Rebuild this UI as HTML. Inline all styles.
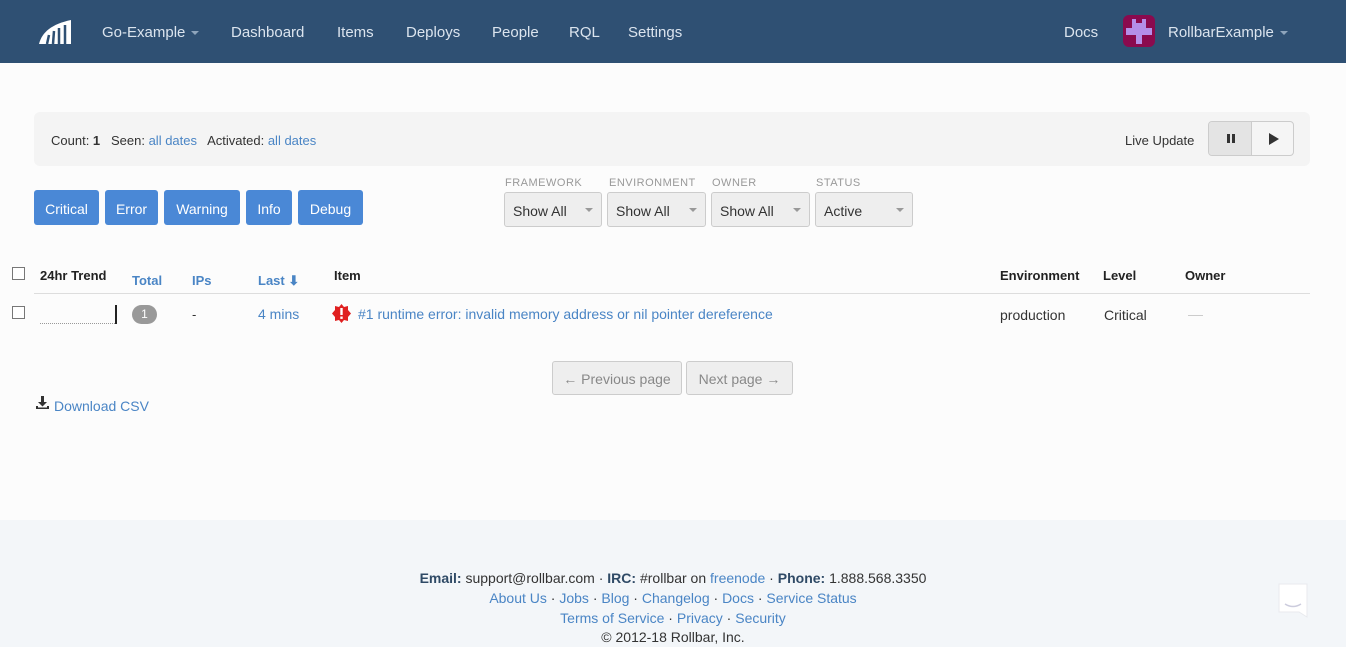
<!DOCTYPE html>
<html><head><meta charset="utf-8">
<style>
*{box-sizing:border-box;margin:0;padding:0}
body{width:1346px;height:647px;overflow:hidden;background:#fcfcfc;font-family:"Liberation Sans",sans-serif;font-size:13px;color:#333;position:relative}
a{color:#4a85c5;text-decoration:none}
.nav{position:absolute;left:0;top:0;width:1346px;height:63px;background:#2f5073}
.nav span{position:absolute;top:24px;font-size:15px;color:#dbe4ee}
.caret{display:inline-block;width:0;height:0;border-left:4px solid transparent;border-right:4px solid transparent;border-top:4px solid #8ea4bb;vertical-align:middle;margin-left:6px}
.bar{position:absolute;left:34px;top:112px;width:1276px;height:54px;background:#f4f4f4;border-radius:6px}
.lvl{position:absolute;top:190px;height:35px;background:#4a88d6;color:#fff;border-radius:3px;font-size:14px;line-height:38px;text-align:center}
.flab{position:absolute;top:177px;font-size:11px;color:#999;letter-spacing:.5px}
.sel{position:absolute;top:192px;height:35px;background:#eee;border:1px solid #ccc;border-radius:3px;font-size:14px;line-height:36px;padding-left:8px;color:#333}
.sel:after{content:"";position:absolute;right:8px;top:15px;border-left:4px solid transparent;border-right:4px solid transparent;border-top:4px solid #999}
.th{position:absolute;top:268px;font-weight:bold;font-size:13px;color:#222}
.cb{position:absolute;width:13px;height:13px;border:1px solid #777;background:#fff}
.btn{position:absolute;top:361px;height:34px;background:#eee;border:1px solid #ccc;border-radius:3px;color:#888;font-size:14px;line-height:34px;text-align:center}
.foot{position:absolute;left:0;top:520px;width:1346px;height:127px;background:#f3f6f9;text-align:center;font-size:14px;color:#333}
.foot div{position:absolute;left:0;width:1346px}
</style></head><body>
<div class="nav">
<svg style="position:absolute;left:39px;top:19px" width="33" height="26" viewBox="0 0 33 26"><path d="M0 25 C3 13 13 5 32 1 L32 25 Z" fill="#fff"/><path d="M8 25 L10 16 M14 25 L15 12 M20 25 L20 9 M26 25 L26 6" stroke="#2f5073" stroke-width="2.5"/></svg>
<span style="left:102px">Go-Example<i class="caret"></i></span>
<span style="left:231px">Dashboard</span>
<span style="left:337px">Items</span>
<span style="left:406px">Deploys</span>
<span style="left:492px">People</span>
<span style="left:569px">RQL</span>
<span style="left:628px">Settings</span>
<span style="left:1064px">Docs</span>
<div style="position:absolute;left:1123px;top:15px;width:32px;height:32px;background:#8a0a4e;border-radius:6px">
<svg width="32" height="32"><path d="M9 4h4v4h6V4h4v9h6v7h-10v9h-6v-9H3v-7h6z" fill="#b48ee8"/></svg></div>
<span style="left:1168px">RollbarExample<i class="caret"></i></span>
</div>
<div class="bar">
<div style="position:absolute;left:17px;top:21px">Count: <b>1</b> &nbsp; Seen: <a>all dates</a> &nbsp; Activated: <a>all dates</a></div>
<div style="position:absolute;left:1091px;top:21px">Live Update</div>
<div style="position:absolute;left:1174px;top:9px;width:86px;height:35px;border:1px solid #ccc;border-radius:4px;background:#f5f5f5;overflow:hidden">
<div style="position:absolute;left:0;top:0;width:43px;height:35px;background:#e4e4e4;border-right:1px solid #ccc"></div>
<div style="position:absolute;left:18px;top:12px;width:3px;height:9px;background:#333"></div><div style="position:absolute;left:23px;top:12px;width:3px;height:9px;background:#333"></div>
<div style="position:absolute;left:60px;top:11px;border-top:6px solid transparent;border-bottom:6px solid transparent;border-left:10px solid #333"></div>
</div></div>
<div class="lvl" style="left:34px;width:65px">Critical</div>
<div class="lvl" style="left:105px;width:53px">Error</div>
<div class="lvl" style="left:164px;width:76px">Warning</div>
<div class="lvl" style="left:246px;width:46px">Info</div>
<div class="lvl" style="left:298px;width:65px">Debug</div>
<div class="flab" style="left:505px">FRAMEWORK</div>
<div class="flab" style="left:609px">ENVIRONMENT</div>
<div class="flab" style="left:712px">OWNER</div>
<div class="flab" style="left:816px">STATUS</div>
<div class="sel" style="left:504px;width:98px">Show All</div>
<div class="sel" style="left:607px;width:99px">Show All</div>
<div class="sel" style="left:711px;width:99px">Show All</div>
<div class="sel" style="left:815px;width:98px">Active</div>
<div class="cb" style="left:12px;top:267px"></div>
<div class="th" style="left:40px">24hr Trend</div>
<div class="th" style="left:132px;top:273px;color:#4a85c5">Total</div>
<div class="th" style="left:192px;top:273px;color:#4a85c5">IPs</div>
<div class="th" style="left:258px;top:273px;color:#4a85c5">Last &#11015;</div>
<div class="th" style="left:334px">Item</div>
<div class="th" style="left:1000px">Environment</div>
<div class="th" style="left:1103px">Level</div>
<div class="th" style="left:1185px">Owner</div>
<div style="position:absolute;left:34px;top:293px;width:1276px;height:1px;background:#ddd"></div>
<div class="cb" style="left:12px;top:306px"></div>
<div style="position:absolute;left:40px;top:323px;width:75px;border-top:1px dotted #999"></div>
<div style="position:absolute;left:115px;top:305px;width:2px;height:19px;background:#222"></div>
<div style="position:absolute;left:132px;top:305px;width:25px;height:19px;border-radius:10px;background:#999;color:#fff;font-size:12px;text-align:center;line-height:19px">1</div>
<div style="position:absolute;left:192px;top:307px">-</div>
<a style="position:absolute;left:258px;top:306px;font-size:14px">4 mins</a>
<svg style="position:absolute;left:332px;top:304px" width="19" height="19" viewBox="0 0 19 19"><polygon points="9.5,0 12,3 16,2 16,6 19,9.5 16,13 16,17 12,16 9.5,19 7,16 3,17 3,13 0,9.5 3,6 3,2 7,3" fill="#e02020"/><rect x="8.3" y="4" width="2.4" height="7" fill="#fff"/><rect x="8.3" y="12.5" width="2.4" height="2.4" fill="#fff"/></svg>
<a style="position:absolute;left:358px;top:306px;font-size:14px">#1 runtime error: invalid memory address or nil pointer dereference</a>
<div style="position:absolute;left:1000px;top:307px;font-size:14px">production</div>
<div style="position:absolute;left:1104px;top:307px;font-size:14px">Critical</div>
<div style="position:absolute;left:1188px;top:315px;width:15px;height:1px;background:#ccc"></div>
<div class="btn" style="left:552px;width:130px">← Previous page</div>
<div class="btn" style="left:686px;width:107px">Next page →</div>
<svg style="position:absolute;left:36px;top:396px" width="13" height="13"><path d="M5 0h3v6h3l-4.5 4.5L2 6h3z M0 10h2v1.5h9V10h2v3H0z" fill="#333"/></svg>
<a style="position:absolute;left:54px;top:398px;font-size:14px">Download CSV</a>
<div class="foot">
<div style="top:50px"><b style="color:#2f4a66">Email:</b> support@rollbar.com · <b style="color:#2f4a66">IRC:</b> #rollbar on <a>freenode</a> · <b style="color:#2f4a66">Phone:</b> 1.888.568.3350</div>
<div style="top:70px"><a>About Us</a> · <a>Jobs</a> · <a>Blog</a> · <a>Changelog</a> · <a>Docs</a> · <a>Service Status</a></div>
<div style="top:90px"><a>Terms of Service</a> · <a>Privacy</a> · <a>Security</a></div>
<div style="top:109px">© 2012-18 Rollbar, Inc.</div>
</div>
<svg style="position:absolute;left:1277px;top:582px" width="33" height="38"><path d="M2 2h28v33l-8-5H2z" fill="#fff" stroke="#e8eaee"/><path d="M8 22q8 5 16 0" stroke="#ccd" fill="none" stroke-width="1.5"/></svg>
</body></html>
